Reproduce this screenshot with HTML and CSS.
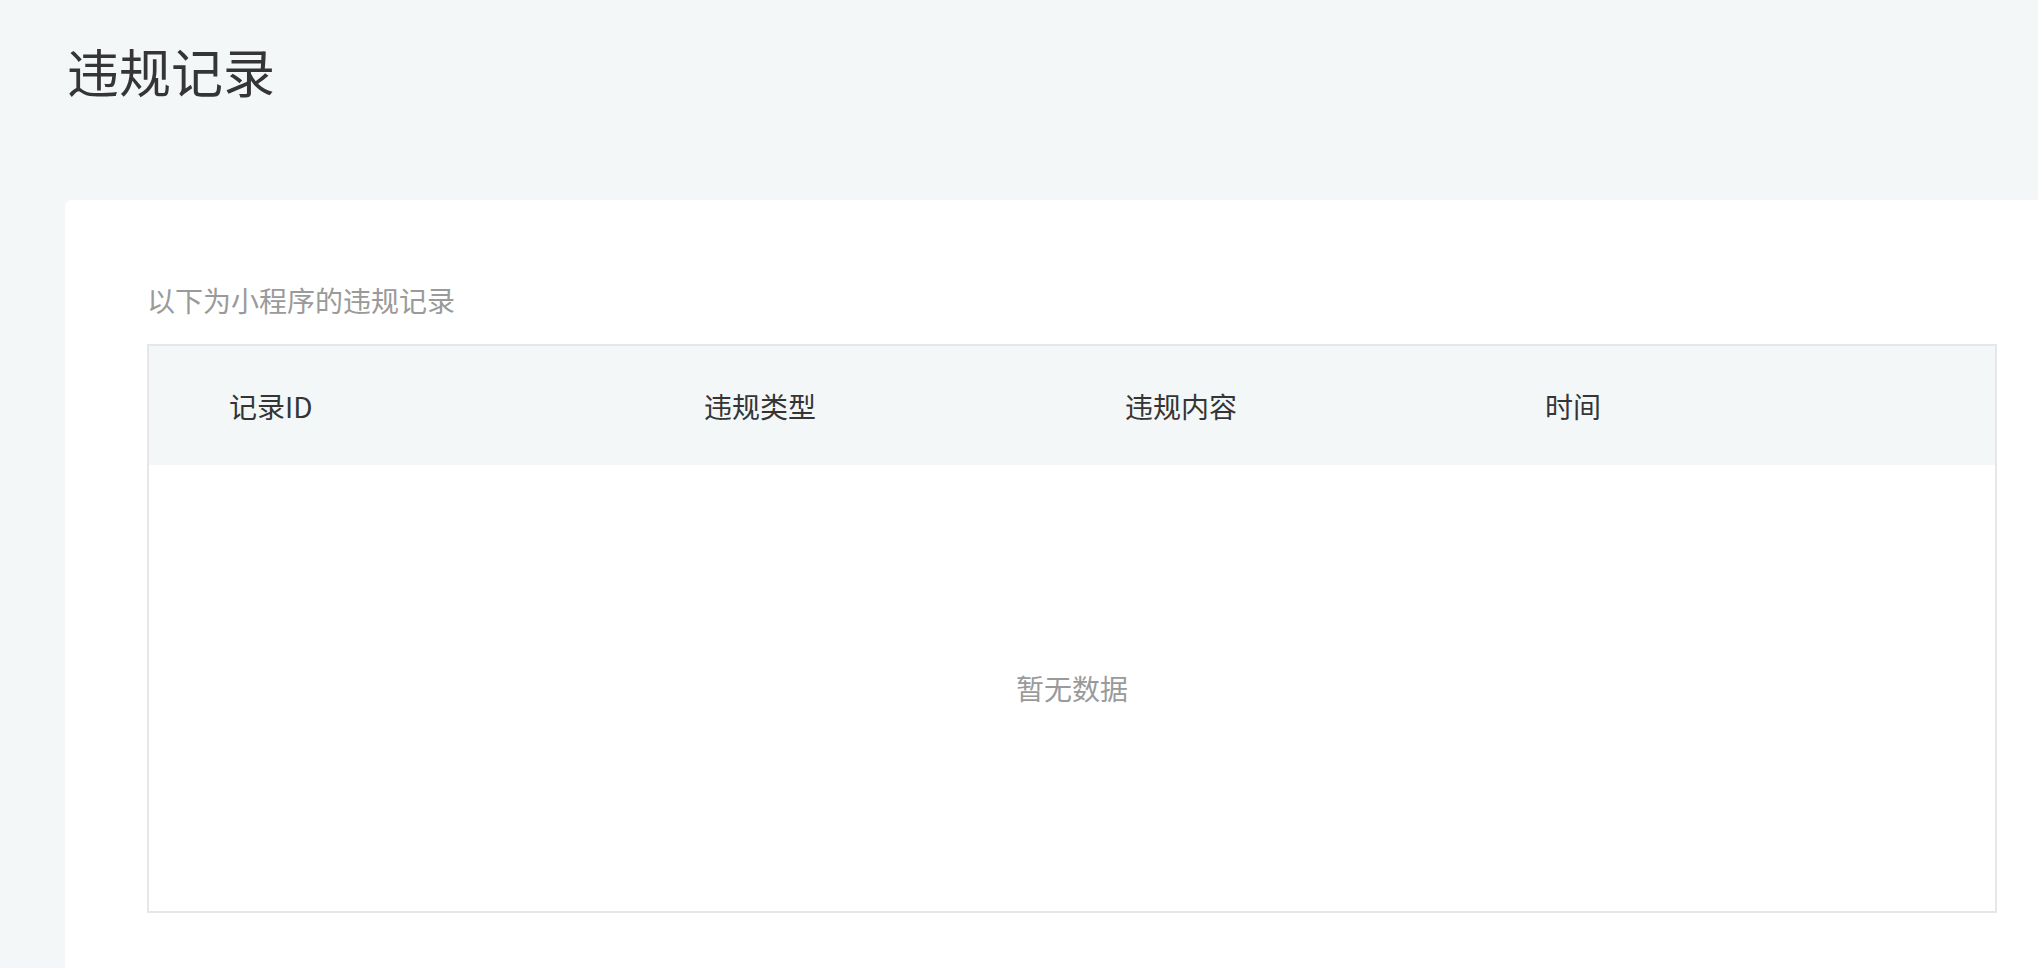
FILE: index.html
```html
<!DOCTYPE html>
<html>
<head>
	<meta charset="utf-8">
	<title>违规记录</title>
	<link rel="stylesheet" href="styles.css">
</head>
<body class="body">

<div class="page-head">
	<h1 class="page-title">违规记录</h1>
</div>

<div class="card">
	<p class="tip">以下为小程序的违规记录</p>

	<table class="record-table">
		<thead>
			<tr>
				<th class="col-id">记录ID</th>
				<th class="col-type">违规类型</th>
				<th class="col-content">违规内容</th>
				<th class="col-time">时间</th>
			</tr>
		</thead>
		<tbody>
			<tr>
				<td class="empty" colspan="4">暂无数据</td>
			</tr>
		</tbody>
	</table>
</div>

</body>
</html>
```

FILE: styles.css
```css
html,
body {
	margin: 0;
	background-color: #f4f7f8;
	font-family: "Noto Sans CJK SC", "Noto Sans", sans-serif;
	color: #353535;
	overflow: hidden;
}

.page-head {
	padding: 45px 0 0 67px;
	height: 200px;
	box-sizing: border-box;
}

.page-title {
	margin: 0;
	font-size: 52px;
	font-weight: normal;
	line-height: 52px;
}

.card {
	margin-left: 65px;
	min-height: 768px;
	background-color: #fff;
	border-radius: 6px 0 0 0;
	padding: 86px 41px 0 82px;
	box-sizing: border-box;
}

.tip {
	margin: 0 0 30px 0;
	font-size: 28px;
	line-height: 28px;
	color: #9a9a9a;
}

.record-table {
	width: 100%;
	border: 2px solid #e6e6ea;
	border-collapse: collapse;
	table-layout: fixed;
}

.record-table th {
	box-sizing: border-box;
	height: 120px;
	padding: 0 0 0 80px;
	background-color: #f4f7f8;
	text-align: left;
	font-size: 28px;
	font-weight: normal;
	color: #353535;
}

.col-id { width: 476px; }
.col-type { width: 421px; }
.col-content { width: 420px; }

.empty {
	height: 446px;
	text-align: center;
	font-size: 28px;
	color: #9a9a9a;
	padding: 0;
}
```
